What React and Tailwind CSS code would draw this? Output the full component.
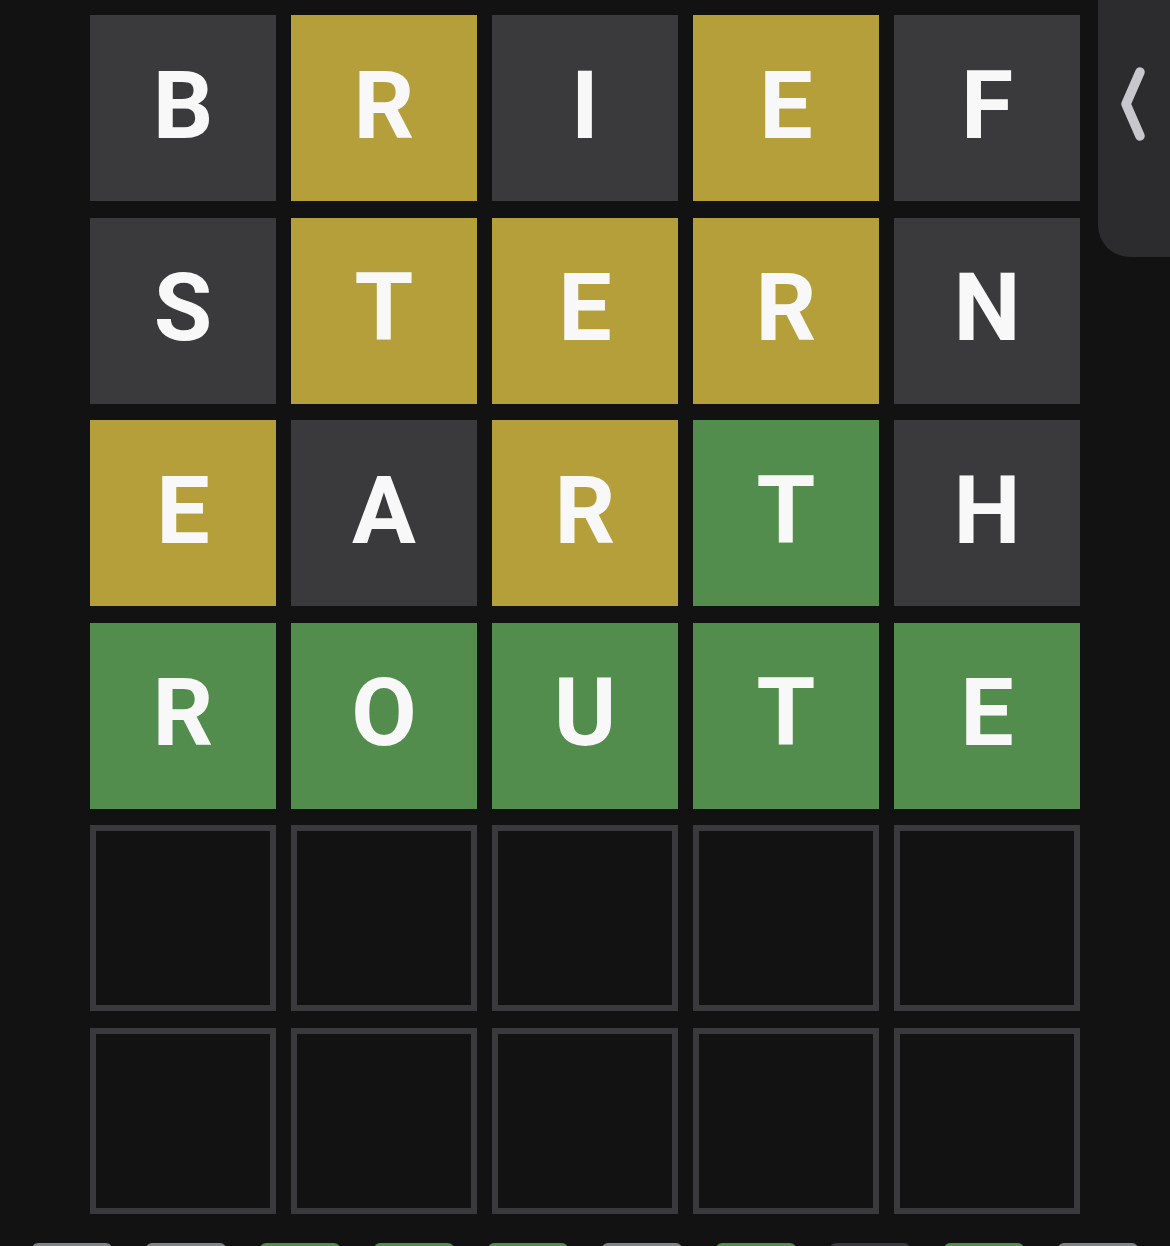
const GRIS = 'bg-[#3a3a3c]';
const AMARILLO = 'bg-[#b59f3b]';
const VERDE = 'bg-[#538d4e]';

const intentos = [
  [['B', GRIS], ['R', AMARILLO], ['I', GRIS], ['E', AMARILLO], ['F', GRIS]],
  [['S', GRIS], ['T', AMARILLO], ['E', AMARILLO], ['R', AMARILLO], ['N', GRIS]],
  [['E', AMARILLO], ['A', GRIS], ['R', AMARILLO], ['T', VERDE], ['H', GRIS]],
  [['R', VERDE], ['O', VERDE], ['U', VERDE], ['T', VERDE], ['E', VERDE]],
];

const teclas = [
  ['Q', 'bg-[#818384]'],
  ['W', 'bg-[#818384]'],
  ['E', VERDE],
  ['R', VERDE],
  ['T', VERDE],
  ['Y', 'bg-[#818384]'],
  ['U', VERDE],
  ['I', GRIS],
  ['O', VERDE],
  ['P', 'bg-[#818384]'],
];

const Casilla = ({ letra, color }) => (
  <div
    className={`w-[186px] h-[186px] flex items-center justify-center ${color}`}
  >
    <span
      className="text-[95px] leading-none font-bold text-[#f8f8f8] mb-[6px]"
      style={{ fontFamily: 'Roboto, "Liberation Sans", Arial, sans-serif' }}
    >
      {letra}
    </span>
  </div>
);

const CasillaVacia = () => (
  <div className="w-[186px] h-[186px] border-[6px] border-[#3a3a3c]" />
);

export default function App() {
  const filasVacias = [0, 1];

  return (
    <div className="relative w-[1170px] h-[1246px] overflow-hidden bg-[#121213]">
      {/* tablero */}
      <div className="pt-[15px] pl-[90px] flex flex-col gap-y-[16.6px]">
        {intentos.map((fila, i) => (
          <div key={i} className="flex gap-x-[15px]">
            {fila.map(([letra, color], j) => (
              <Casilla key={j} letra={letra} color={color} />
            ))}
          </div>
        ))}
        {filasVacias.map((i) => (
          <div key={`v${i}`} className="flex gap-x-[15px]">
            {[0, 1, 2, 3, 4].map((j) => (
              <CasillaVacia key={j} />
            ))}
          </div>
        ))}
      </div>

      {/* teclado, apenas asoma abajo */}
      <div className="mt-[29px] pl-[32px] flex gap-x-[34px]">
        {teclas.map(([t, color]) => (
          <div
            key={t}
            className={`w-[80px] h-[100px] rounded-[6px] ${color}`}
          />
        ))}
      </div>

      {/* pestaña lateral */}
      <div className="absolute top-0 right-0 w-[72px] h-[257px] rounded-bl-[32px] bg-[#2c2c2e]">
        <svg
          className="absolute left-[18px] top-[60px]"
          width="36"
          height="90"
          viewBox="0 0 36 90"
        >
          <path
            d="M24 12 L10 44 L24 76"
            fill="none"
            stroke="#c7c7cc"
            strokeWidth="9.5"
            strokeLinecap="round"
            strokeLinejoin="round"
          />
        </svg>
      </div>
    </div>
  );
}
